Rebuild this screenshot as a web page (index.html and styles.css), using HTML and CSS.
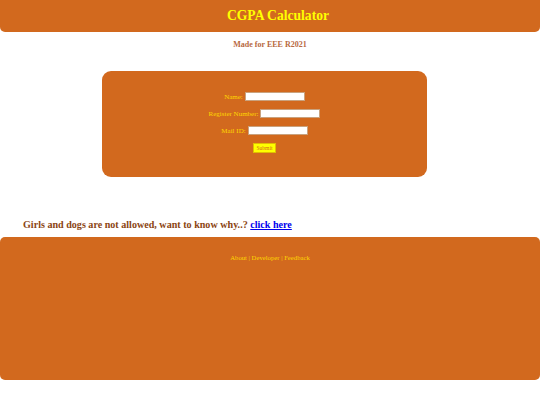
FILE: index.html
```html
<!DOCTYPE html>
<html>
<head>
<meta charset="utf-8">
<link rel="stylesheet" href="styles.css">
</head>
<body>
<header class="top">
  <h1 class="title">CGPA Calculator</h1>
</header>
<p class="sub">Made for EEE R2021</p>
<div class="card">
  <form class="form">
    <div class="row"><label>Name:</label><span class="input"></span></div>
    <div class="row"><label>Register Number:</label><span class="input"></span></div>
    <div class="row"><label>Mail ID:</label><span class="input"></span></div>
    <div class="row"><span class="btn">Submit</span></div>
  </form>
</div>
<p class="note">Girls and dogs are not allowed, want to know why..? <a href="#" class="link">click here</a></p>
<footer class="foot">
  <p class="links">About | Developer | Feedback</p>
</footer>
</body>
</html>
```
FILE: styles.css
```css
html, body { margin: 0; padding: 0; background: #fff; }
body { font-family: "Liberation Serif", "Times New Roman", serif; width: 540px; height: 405px; overflow: hidden; }
.top {
  background: #d2691e;
  height: 32px;
  border-radius: 0 0 5px 5px;
  display: flex;
  align-items: center;
  justify-content: center;
  padding-left: 16px;
}
.title { margin: 0; font-size: 13.6px; font-weight: bold; color: #ffff00; }
.sub { margin: 8px 0 0; text-align: center; font-size: 8px; font-weight: bold; color: #b8693f; line-height: 10px; }
.card {
  margin: 21px 113px 0 102px;
  height: 106px;
  background: #d2691e;
  border-radius: 9px;
  display: flex;
  justify-content: center;
}
.form { display: flex; flex-direction: column; align-items: center; gap: 8px; padding-top: 21px; }
.row { display: flex; align-items: center; height: 9px; gap: 2px; }
.row label { font-size: 7px; color: #ffd700; }
.input { display: block; width: 58px; height: 7px; background: #fff; border: 1px solid #c9a27e; }
.btn { display: block; font-size: 5.5px; color: #d2691e; background: #ffff00; border: 1px solid #e0c000; padding: 1px 3px; line-height: 6px; margin-top: 1px; }
.note { margin: 41px 0 0 23px; font-size: 10.1px; font-weight: bold; color: #8b4513; line-height: 14px; }
.link { color: #0000ee; text-decoration: underline; }
.foot {
  margin-top: 5px;
  height: 143px;
  background: #d2691e;
  border-radius: 5px;
  display: flex;
  justify-content: center;
}
.links { margin: 17px 0 0; font-size: 6.7px; color: #ffd700; }
```
